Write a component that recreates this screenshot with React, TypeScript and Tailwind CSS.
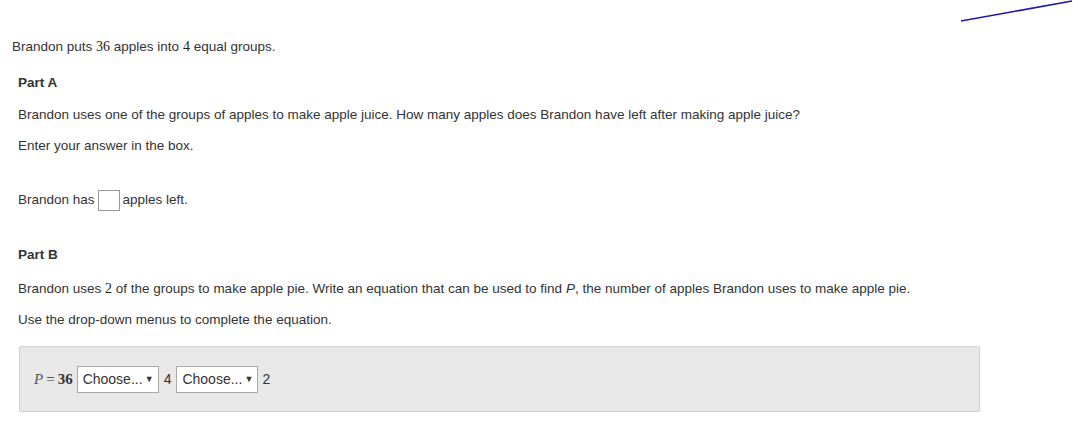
import React from "react";

const Select = () => (
  <div className="inline-flex items-center justify-between w-[82px] h-[27px] bg-white border border-[#a9a9a9] pl-[5px] pr-[4px] text-[14px] text-[#333]">
    <span>Choose...</span>
    <span className="text-[9px]">▼</span>
  </div>
);

export default function App() {
  return (
    <div className="relative w-[1073px] h-[421px] bg-white text-[#333] text-[13.5px] leading-[18px]" style={{ fontFamily: '"Liberation Sans", Arial, sans-serif' }}>
      <svg className="absolute left-[960px] top-0" width="113" height="24" viewBox="0 0 113 24">
        <line x1="1" y1="21" x2="112" y2="1" stroke="#1a1aa6" strokeWidth="1.6" />
      </svg>
      <div className="pt-[38px] pl-[12px]">
        Brandon puts <span className="font-['Liberation_Serif'] text-[14px] text-[#222]">36</span> apples into <span className="font-['Liberation_Serif'] text-[14px] text-[#222]">4</span> equal groups.
      </div>
      <div className="pl-[18px]">
        <div className="mt-[18px] font-bold">Part A</div>
        <div className="mt-[14px]">Brandon uses one of the groups of apples to make apple juice. How many apples does Brandon have left after making apple juice?</div>
        <div className="mt-[13px]">Enter your answer in the box.</div>
        <div className="mt-[34px] flex items-center h-[22px]">
          <span>Brandon has</span>
          <span className="inline-block w-[22px] h-[21px] border border-[#999] bg-white mx-[3px]"></span>
          <span>apples left.</span>
        </div>
        <div className="mt-[35px] font-bold">Part B</div>
        <div className="mt-[16px]">
          Brandon uses <span className="font-['Liberation_Serif'] text-[14px] text-[#222]">2</span> of the groups to make apple pie. Write an equation that can be used to find <i>P</i>, the number of apples Brandon uses to make apple pie.
        </div>
        <div className="mt-[13px]">Use the drop-down menus to complete the equation.</div>
      </div>
      <div className="mt-[17px] ml-[19px] w-[961px] h-[66px] bg-[#e8e8e8] border border-[#d0d0d0] rounded-[2px] flex items-center pl-[14px]">
        <span className="font-['Liberation_Serif'] text-[15px] mr-[4px]">
          <i className="text-[#555]">P</i><span className="mx-[3px]">=</span><b>36</b>
        </span>
        <Select />
        <span className="mx-[5px] text-[14px]">4</span>
        <Select />
        <span className="ml-[4px] text-[14px]">2</span>
      </div>
    </div>
  );
}
